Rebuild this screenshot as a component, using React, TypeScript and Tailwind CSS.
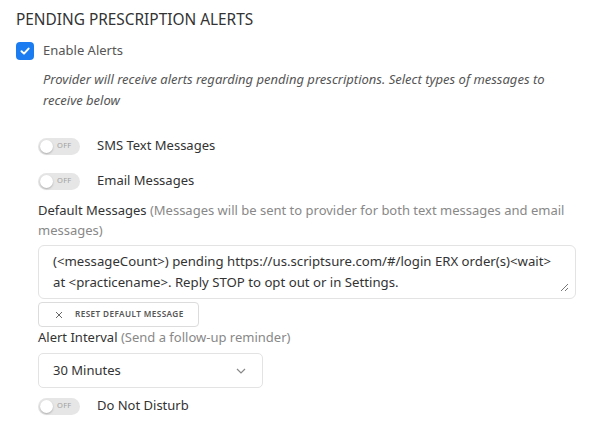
import React from "react";

function Toggle({ label }: { label: string }) {
  return (
    <div className="flex items-center">
      <div className="relative w-[42px] h-[17px] rounded-full bg-[#e6e6e6] flex items-center">
        <div className="absolute left-[2px] top-[2px] w-[13px] h-[13px] rounded-full bg-white shadow-[0_1px_2px_rgba(0,0,0,0.25)]" />
        <span className="ml-[19px] text-[7.5px] leading-none text-[#a0a0a0] tracking-[0.3px]">OFF</span>
      </div>
      <span className="ml-[17px] text-[13px] text-[#333]">{label}</span>
    </div>
  );
}

export default function App() {
  return (
    <div
      className="w-[590px] h-[441px] bg-white text-[#333] overflow-hidden"
      style={{ fontFamily: '"Noto Sans", "Open Sans", sans-serif' }}
    >
      <div className="pl-[16px] pt-[9px]">
        <div className="text-[15.4px] leading-[22px] text-[#333]">PENDING PRESCRIPTION ALERTS</div>
        <div className="flex items-center mt-[10px] h-[20px]">
          <div className="w-[18px] h-[18px] rounded-[4px] bg-[#1a7cf0] flex items-center justify-center">
            <svg width="12" height="12" viewBox="0 0 12 12">
              <path d="M2.5 6.2 L5 8.6 L9.6 3.6" fill="none" stroke="white" strokeWidth="2" strokeLinecap="round" strokeLinejoin="round" />
            </svg>
          </div>
          <span className="ml-[9px] text-[13px] text-[#555]">Enable Alerts</span>
        </div>
        <p className="ml-[27px] mt-[8px] text-[13px] leading-[21px] italic text-[#555] w-[520px]">
          Provider will receive alerts regarding pending prescriptions. Select types of messages to receive below
        </p>
      </div>
      <div className="pl-[38px]">
        <div className="mt-[25px] h-[20px] flex items-center">
          <Toggle label="SMS Text Messages" />
        </div>
        <div className="mt-[15px] h-[20px] flex items-center">
          <Toggle label="Email Messages" />
        </div>
        <div className="mt-[9px] text-[13px] leading-[20px] w-[540px]">
          <span className="text-[#333]">Default Messages</span>{" "}
          <span className="text-[#888]">(Messages will be sent to provider for both text messages and email messages)</span>
        </div>
        <div className="relative mt-[5px] w-[538px] h-[54px] border border-[#e3e3e3] rounded-[6px] px-[14px] py-[5px] text-[13.2px] leading-[21px] text-[#333]">
          (&lt;messageCount&gt;) pending https://us.scriptsure.com/#/login ERX order(s)&lt;wait&gt;
          <br />
          at &lt;practicename&gt;. Reply STOP to opt out or in Settings.
          <svg className="absolute right-[6px] bottom-[6px]" width="10" height="10" viewBox="0 0 10 10">
            <path d="M9 2 L2 9 M9 6 L6 9" stroke="#777" strokeWidth="1" />
          </svg>
        </div>
        <div className="mt-[3px] w-[161px] h-[25px] border border-[#dcdcdc] rounded-[4px] flex items-center pl-[16px]">
          <svg width="8" height="8" viewBox="0 0 8 8">
            <path d="M1 1 L7 7 M7 1 L1 7" stroke="#666" strokeWidth="1" />
          </svg>
          <span className="ml-[12px] text-[8.2px] font-semibold tracking-[0.4px] text-[#555]">RESET DEFAULT MESSAGE</span>
        </div>
        <div className="mt-[0px] text-[13px] leading-[20px]">
          <span className="text-[#333]">Alert Interval</span>{" "}
          <span className="text-[#888]">(Send a follow-up reminder)</span>
        </div>
        <div className="mt-[6px] w-[225px] h-[35px] border border-[#e3e3e3] rounded-[5px] flex items-center justify-between pl-[14px] pr-[16px]">
          <span className="text-[13px] text-[#333]">30 Minutes</span>
          <svg width="10" height="6" viewBox="0 0 10 6">
            <path d="M1 1 L5 5 L9 1" fill="none" stroke="#888" strokeWidth="1.2" />
          </svg>
        </div>
        <div className="mt-[8px] h-[20px] flex items-center">
          <Toggle label="Do Not Disturb" />
        </div>
      </div>
    </div>
  );
}
